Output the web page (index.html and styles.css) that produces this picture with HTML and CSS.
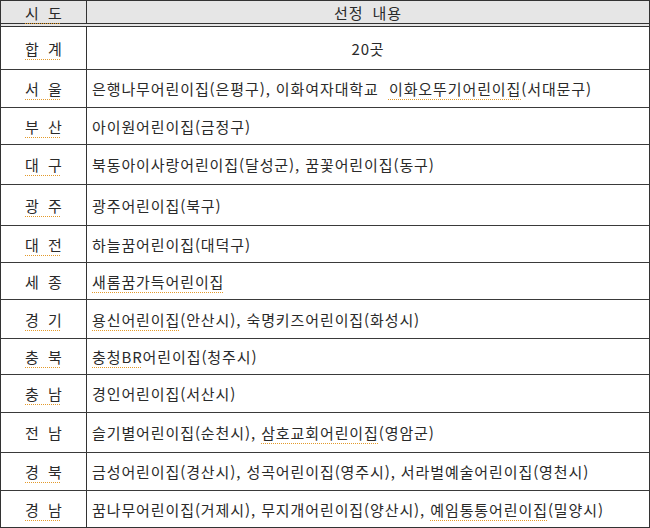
FILE: index.html
```html
<!DOCTYPE html>
<html lang="ko">
<head>
<meta charset="utf-8">
<link rel="stylesheet" href="styles.css">
</head>
<body>
<div class="table">
  <div class="row head h22">
    <div class="c1"><span class="sp">시 도</span></div>
    <div class="c2 center">선정 내용</div>
  </div>
  <div class="row h42">
    <div class="c1"><span class="sp">합 계</span></div>
    <div class="c2 center">20곳</div>
  </div>
  <div class="row h37">
    <div class="c1"><span class="sp">서 울</span></div>
    <div class="c2">은행나무어린이집(은평구), 이화여자대학교 &nbsp;<span class="sp">이화오뚜기어린이집</span>(서대문구)</div>
  </div>
  <div class="row h36">
    <div class="c1"><span class="sp">부 산</span></div>
    <div class="c2">아이원어린이집(금정구)</div>
  </div>
  <div class="row h39">
    <div class="c1"><span class="sp">대 구</span></div>
    <div class="c2">북동아이사랑어린이집(달성군), 꿈꽃어린이집(동구)</div>
  </div>
  <div class="row h40">
    <div class="c1"><span class="sp">광 주</span></div>
    <div class="c2">광주어린이집(북구)</div>
  </div>
  <div class="row h36">
    <div class="c1"><span class="sp">대 전</span></div>
    <div class="c2">하늘꿈어린이집(대덕구)</div>
  </div>
  <div class="row h36">
    <div class="c1">세 종</div>
    <div class="c2"><span class="sp">새롬꿈가득어린이집</span></div>
  </div>
  <div class="row h38">
    <div class="c1"><span class="sp">경 기</span></div>
    <div class="c2"><span class="sp">용신어린이집</span>(안산시), 숙명키즈어린이집(화성시)</div>
  </div>
  <div class="row h35">
    <div class="c1"><span class="sp">충 북</span></div>
    <div class="c2"><span class="sp">충청BR</span>어린이집(청주시)</div>
  </div>
  <div class="row h37">
    <div class="c1"><span class="sp">충 남</span></div>
    <div class="c2">경인어린이집(서산시)</div>
  </div>
  <div class="row h39">
    <div class="c1">전 남</div>
    <div class="c2">슬기별어린이집(순천시), <span class="sp">삼호교회어린이집</span>(영암군)</div>
  </div>
  <div class="row h37">
    <div class="c1"><span class="sp">경 북</span></div>
    <div class="c2">금성어린이집(경산시), 성곡어린이집(영주시), 서라벌예술어린이집(영천시)</div>
  </div>
  <div class="row h36 last">
    <div class="c1"><span class="sp">경 남</span></div>
    <div class="c2">꿈나무어린이집(거제시), 무지개어린이집(양산시), <span class="sp">예임통통어린이집</span>(밀양시)</div>
  </div>
</div>
</body>
</html>
```

FILE: styles.css
```css
html, body {
  margin: 0;
  padding: 0;
  background: #ffffff;
}
.table {
  width: 650px;
  height: 528px;
  box-sizing: border-box;
  border: 1px solid #333333;
  font-family: "Noto Sans CJK KR", "Malgun Gothic", sans-serif;
  font-size: 15px;
  color: #2a2a2a;
}
.row {
  display: grid;
  grid-template-columns: 86px 1fr;
  border-bottom: 1px solid #3a3a3a;
}
.row.last {
  border-bottom: none;
}
.row.head {
  background: #e6e6e6;
  border-bottom: 4px double #333333;
}
.c1 {
  border-right: 1px solid #333333;
  display: flex;
  align-items: center;
  justify-content: center;
  word-spacing: 5px;
}
.c2 {
  display: flex;
  align-items: center;
  padding-left: 5px;
  letter-spacing: 0.9px;
  white-space: pre;
}
.c2.center {
  justify-content: center;
  padding-left: 0;
}
.head .c2 {
  word-spacing: 4px;
}
.sp {
  text-decoration: underline dotted #e39a2b;
  text-decoration-thickness: 1px;
  text-underline-offset: 4px;
}
.h22 { height: 22px; }
.h35 { height: 35px; }
.h36 { height: 36px; }
.h37 { height: 37px; }
.h38 { height: 38px; }
.h39 { height: 39px; }
.h40 { height: 40px; }
.h42 { height: 42px; }
```
